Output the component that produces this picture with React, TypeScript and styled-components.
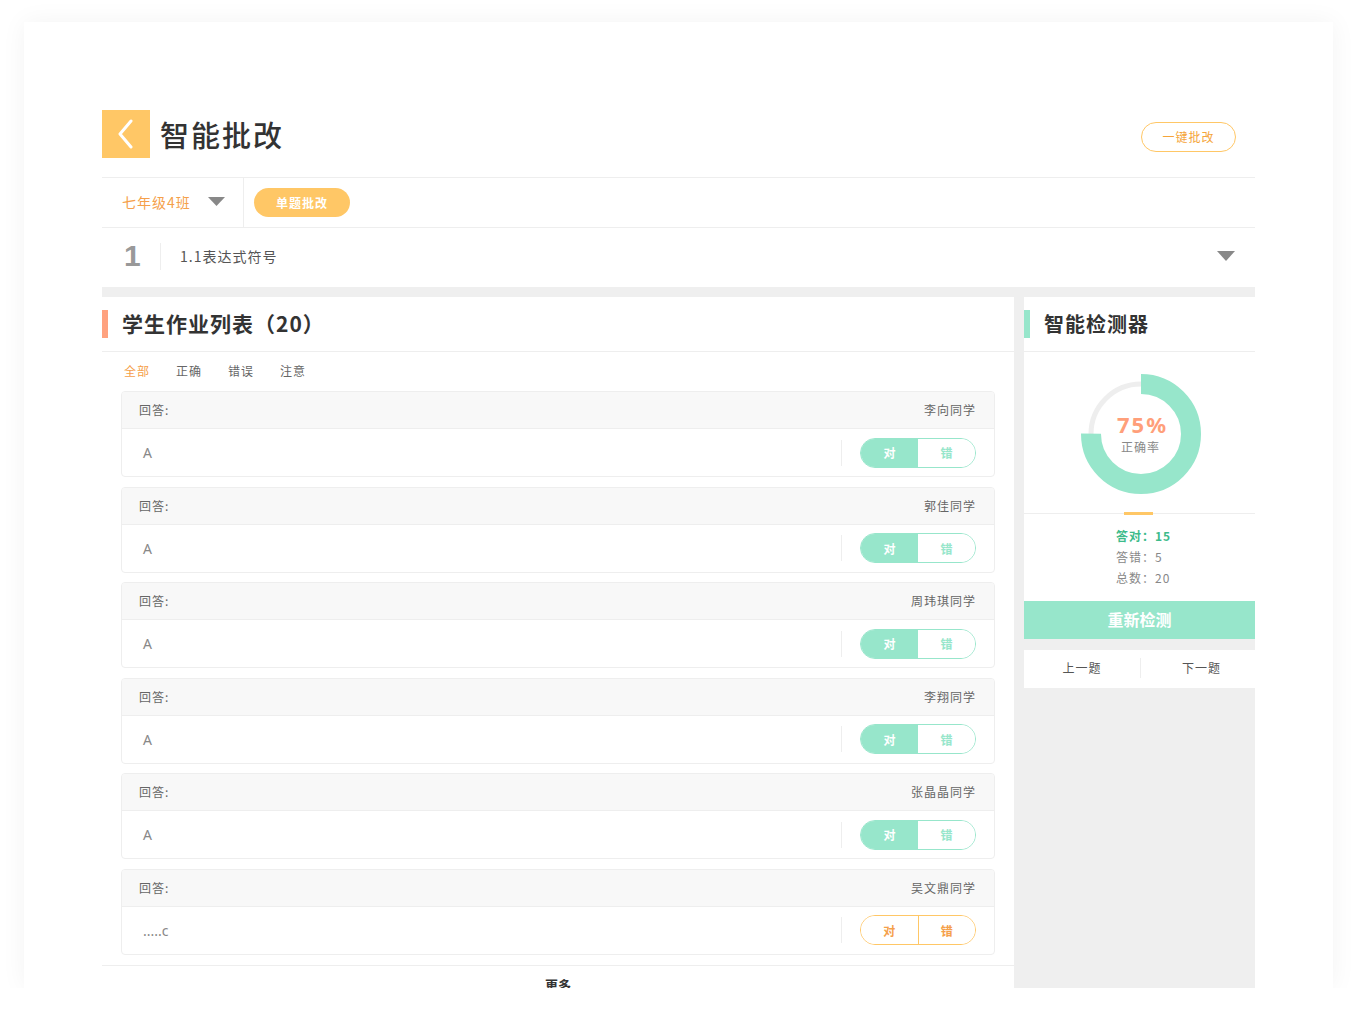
import React from "react";
import styled, { createGlobalStyle } from "styled-components";

const GlobalStyle = createGlobalStyle`
  * { box-sizing: border-box; }
  html, body { margin: 0; padding: 0; background: #ffffff; }
  body { font-family: "Noto Sans CJK SC", "Noto Sans", sans-serif; color: #333; }
`;

const MINT = "#97e6cb";
const ORANGE = "#ffc766";
const ORANGE_TEXT = "#f5a04a";

const Card = styled.div`
  margin: 22px 24px 0;
  width: 1309px;
  height: 966px;
  background: #fff;
  box-shadow: 0 0 24px rgba(0, 0, 0, 0.05);
  overflow: hidden;
  padding: 88px 78px 0;
`;

const Header = styled.div`
  display: flex;
  align-items: center;
  height: 68px;
  padding-bottom: 20px;
  border-bottom: 1px solid #eeeeee;
`;

const BackButton = styled.div`
  width: 48px;
  height: 48px;
  background: ${ORANGE};
  display: flex;
  align-items: center;
  justify-content: center;
`;

const Title = styled.h1`
  margin: 0 0 0 10px;
  font-size: 29px;
  font-weight: 500;
  letter-spacing: 2px;
  color: #333;
  flex: 1;
`;

const OutlineButton = styled.div`
  width: 95px;
  height: 30px;
  border: 1px solid ${ORANGE};
  border-radius: 15px;
  color: #f5a53a;
  font-size: 12px;
  letter-spacing: 1px;
  display: flex;
  align-items: center;
  justify-content: center;
  margin-right: 19px;
  margin-top: 6px;
`;

const FilterRow = styled.div`
  display: flex;
  align-items: center;
  height: 50px;
  border-bottom: 1px solid #eeeeee;
`;

const ClassSelect = styled.div`
  width: 142px;
  height: 100%;
  display: flex;
  align-items: center;
  padding: 0 0 2px 20px;
  border-right: 1px solid #eeeeee;
  color: ${ORANGE_TEXT};
  font-size: 14px;
  letter-spacing: 1px;
  gap: 17px;
`;

const FillButton = styled.div`
  margin-left: 10px;
  width: 96px;
  height: 29px;
  border-radius: 15px;
  background: ${ORANGE};
  color: #fff;
  font-size: 12px;
  font-weight: 700;
  letter-spacing: 1px;
  display: flex;
  align-items: center;
  justify-content: center;
`;

const QuestionRow = styled.div`
  display: flex;
  align-items: center;
  height: 59px;
  padding-bottom: 3px;
`;

const QNumber = styled.div`
  width: 58px;
  padding-left: 22px;
  font-size: 30px;
  font-weight: 700;
  color: #999;
  font-family: "Liberation Sans", "Noto Sans", sans-serif;
`;

const QDivider = styled.div`
  width: 1px;
  height: 27px;
  background: #eeeeee;
`;

const QText = styled.div`
  margin-left: 19px;
  font-size: 14px;
  color: #555;
  letter-spacing: 1px;
  flex: 1;
`;

const Caret = styled.svg<{ $mr?: number }>`
  display: block;
  margin-right: ${(p) => p.$mr ?? 0}px;
`;

const Body = styled.div`
  display: flex;
  gap: 10px;
  background: #efefef;
  padding-top: 10px;
  align-items: flex-start;
  min-height: 700px;
`;

const LeftPanel = styled.div`
  width: 912px;
  background: #fff;
  min-height: 700px;
`;

const SectionTitle = styled.div<{ $accent: string; $size: number; $lift: number }>`
  height: 55px;
  display: flex;
  align-items: center;
  border-bottom: 1px solid #eeeeee;
  font-size: ${(p) => p.$size}px;
  font-weight: 700;
  color: #333;
  letter-spacing: 1px;
  &::before {
    content: "";
    width: 6px;
    height: 28px;
    background: ${(p) => p.$accent};
    margin-right: 14px;
  }
  & > span {
    margin-bottom: ${(p) => p.$lift}px;
  }
`;

const Tabs = styled.div`
  display: flex;
  gap: 26px;
  padding: 0 0 3px 22px;
  height: 39px;
  align-items: center;
`;

const Tab = styled.div<{ $active?: boolean }>`
  font-size: 12px;
  color: ${(p) => (p.$active ? ORANGE_TEXT : "#666")};
  letter-spacing: 1px;
`;

const List = styled.div`
  display: flex;
  flex-direction: column;
  gap: 9.5px;
  padding: 0 19px;
`;

const AnswerCard = styled.div`
  border: 1px solid #eeeeee;
  border-radius: 4px;
  overflow: hidden;
`;

const CardHead = styled.div`
  height: 37px;
  background: #f8f8f8;
  border-bottom: 1px solid #eeeeee;
  display: flex;
  align-items: center;
  justify-content: space-between;
  padding: 0 18px 1px 17px;
  font-size: 12px;
  color: #666;
  letter-spacing: 1px;
`;

const CardBody = styled.div`
  height: 47px;
  display: flex;
  align-items: center;
  padding: 0 18px 0 21px;
`;

const AnswerText = styled.div`
  flex: 1;
  font-size: 14px;
  color: #888;
  font-family: "Noto Sans", sans-serif;
`;

const BodyDivider = styled.div`
  width: 1px;
  height: 26px;
  background: #eeeeee;
  margin-right: 18px;
`;

const Toggle = styled.div<{ $color: string }>`
  width: 116px;
  height: 30px;
  border: 1px solid ${(p) => p.$color};
  border-radius: 15px;
  display: flex;
  overflow: hidden;
`;

const ToggleHalf = styled.div<{ $bg: string; $fg: string; $sep?: string }>`
  flex: 1;
  display: flex;
  align-items: center;
  justify-content: center;
  background: ${(p) => p.$bg};
  color: ${(p) => p.$fg};
  font-size: 12px;
  font-weight: 700;
  border-left: ${(p) => (p.$sep ? `1px solid ${p.$sep}` : "none")};
`;

const More = styled.div`
  margin-top: 10px;
  border-top: 1px solid #eeeeee;
  height: 40px;
  line-height: 38px;
  text-align: center;
  font-size: 13px;
  font-weight: 700;
  color: #333;
`;

const RightCol = styled.div`
  width: 231px;
  display: flex;
  flex-direction: column;
  gap: 11px;
`;

const RightCard = styled.div`
  background: #fff;
`;

const RingArea = styled.div`
  position: relative;
  height: 162px;
  border-bottom: 1px solid #eeeeee;
  display: flex;
  justify-content: center;
  padding-top: 20px;
  &::after {
    content: "";
    position: absolute;
    left: 100px;
    bottom: -2px;
    width: 29px;
    height: 3px;
    background: ${ORANGE};
  }
`;

const RingWrap = styled.div`
  position: relative;
  width: 124px;
  height: 124px;
  margin-left: 2px;
`;

const RingLabel = styled.div`
  position: absolute;
  inset: 0;
  display: flex;
  flex-direction: column;
  align-items: center;
  justify-content: center;
  padding: 0 0 2px 4px;
`;

const Percent = styled.div`
  font-size: 22px;
  font-weight: 700;
  color: #ff9f7a;
  letter-spacing: 2px;
  line-height: 26px;
  font-family: "Noto Sans", sans-serif;
`;

const RateText = styled.div`
  font-size: 12px;
  color: #888;
  letter-spacing: 1px;
  line-height: 18px;
  margin-top: 1px;
  margin-right: 4px;
`;

const Stats = styled.div`
  padding: 11px 0 13px 92px;
`;

const Stat = styled.div<{ $color: string; $bold?: boolean }>`
  font-size: 12px;
  line-height: 21px;
  color: ${(p) => p.$color};
  font-weight: ${(p) => (p.$bold ? 700 : 400)};
  letter-spacing: 1px;
`;

const Recheck = styled.div`
  height: 38px;
  background: ${MINT};
  color: #fff;
  font-size: 16px;
  font-weight: 700;
  display: flex;
  align-items: center;
  justify-content: center;
  padding-bottom: 2px;
`;

const Nav = styled.div`
  height: 38px;
  background: #fff;
  display: flex;
  align-items: center;
`;

const NavItem = styled.div<{ $sep?: boolean }>`
  width: ${(p) => (p.$sep ? "115px" : "116px")};
  text-align: center;
  font-size: 12px;
  color: #555;
  letter-spacing: 1px;
  border-left: ${(p) => (p.$sep ? "1px solid #eeeeee" : "none")};
  padding-left: ${(p) => (p.$sep ? 7 : 0)}px;
  line-height: 20px;
  margin-bottom: 2px;
`;

type Row = { name: string; answer: string; state: "ok" | "warn" };

const rows: Row[] = [
  { name: "李向同学", answer: "A", state: "ok" },
  { name: "郭佳同学", answer: "A", state: "ok" },
  { name: "周玮琪同学", answer: "A", state: "ok" },
  { name: "李翔同学", answer: "A", state: "ok" },
  { name: "张晶晶同学", answer: "A", state: "ok" },
  { name: "吴文鼎同学", answer: ".....c", state: "warn" },
];

const Down = ({ w, h, mr }: { w: number; h: number; mr?: number }) => (
  <Caret width={w} height={h} viewBox={`0 0 ${w} ${h}`} $mr={mr}>
    <polygon points={`0,0 ${w},0 ${w / 2},${h}`} fill="#888" />
  </Caret>
);

const Ring = () => {
  const r = 50;
  const c = 2 * Math.PI * r;
  return (
    <RingWrap>
      <svg width="124" height="124" viewBox="0 0 124 124">
        <circle cx="62" cy="62" r={r} fill="none" stroke="#eeeeee" strokeWidth="5" />
        <circle
          cx="62"
          cy="62"
          r={r}
          fill="none"
          stroke={MINT}
          strokeWidth="20"
          strokeDasharray={`${c * 0.75} ${c}`}
          transform="rotate(-90 62 62)"
        />
      </svg>
      <RingLabel>
        <Percent>75%</Percent>
        <RateText>正确率</RateText>
      </RingLabel>
    </RingWrap>
  );
};

export default function App() {
  return (
    <>
      <GlobalStyle />
      <Card>
        <Header>
          <BackButton>
            <svg width="20" height="30" viewBox="0 0 20 30">
              <polyline points="15,2 4,15 15,28" fill="none" stroke="#fff" strokeWidth="3" strokeLinecap="round" strokeLinejoin="round" />
            </svg>
          </BackButton>
          <Title>智能批改</Title>
          <OutlineButton>一键批改</OutlineButton>
        </Header>
        <FilterRow>
          <ClassSelect>
            七年级4班
            <Down w={17} h={9} />
          </ClassSelect>
          <FillButton>单题批改</FillButton>
        </FilterRow>
        <QuestionRow>
          <QNumber>1</QNumber>
          <QDivider />
          <QText>1.1表达式符号</QText>
          <Down w={18} h={10} mr={20} />
        </QuestionRow>
        <Body>
          <LeftPanel>
            <SectionTitle $accent="#ffa27f" $size={21} $lift={3}>
              <span>学生作业列表（20）</span>
            </SectionTitle>
            <Tabs>
              <Tab $active>全部</Tab>
              <Tab>正确</Tab>
              <Tab>错误</Tab>
              <Tab>注意</Tab>
            </Tabs>
            <List>
              {rows.map((row) => {
                const ok = row.state === "ok";
                const color = ok ? MINT : ORANGE;
                return (
                  <AnswerCard key={row.name}>
                    <CardHead>
                      <span>回答:</span>
                      <span>{row.name}</span>
                    </CardHead>
                    <CardBody>
                      <AnswerText>{row.answer}</AnswerText>
                      <BodyDivider />
                      <Toggle $color={color}>
                        {ok ? (
                          <>
                            <ToggleHalf $bg={MINT} $fg="#fff">对</ToggleHalf>
                            <ToggleHalf $bg="#fff" $fg={MINT}>错</ToggleHalf>
                          </>
                        ) : (
                          <>
                            <ToggleHalf $bg="#fff" $fg={ORANGE_TEXT}>对</ToggleHalf>
                            <ToggleHalf $bg="#fff" $fg={ORANGE_TEXT} $sep={ORANGE}>错</ToggleHalf>
                          </>
                        )}
                      </Toggle>
                    </CardBody>
                  </AnswerCard>
                );
              })}
            </List>
            <More>更多</More>
          </LeftPanel>
          <RightCol>
            <RightCard>
              <SectionTitle $accent={MINT} $size={20} $lift={1}>
                <span>智能检测器</span>
              </SectionTitle>
              <RingArea>
                <Ring />
              </RingArea>
              <Stats>
                <Stat $color="#3dbb8a" $bold>答对：15</Stat>
                <Stat $color="#888">答错：5</Stat>
                <Stat $color="#888">总数：20</Stat>
              </Stats>
              <Recheck>重新检测</Recheck>
            </RightCard>
            <Nav>
              <NavItem>上一题</NavItem>
              <NavItem $sep>下一题</NavItem>
            </Nav>
          </RightCol>
        </Body>
      </Card>
    </>
  );
}
